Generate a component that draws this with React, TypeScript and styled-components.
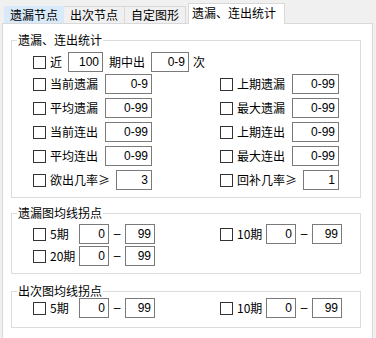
import React from "react";
import styled, { createGlobalStyle } from "styled-components";

const GlobalStyle = createGlobalStyle`
  html, body {
    margin: 0;
    padding: 0;
  }
  body {
    background: #f0f0f0;
    overflow: hidden;
    font-family: "Noto Sans CJK SC", "Microsoft YaHei", sans-serif;
    font-size: 12px;
    color: #000;
  }
`;

const Window = styled.div`
  width: 376px;
  height: 338px;
  overflow: hidden;
  background: #f0f0f0;
`;

const TabBar = styled.div`
  display: flex;
  align-items: flex-end;
  height: 23px;
  padding-left: 4px;
  position: relative;
  z-index: 1;
`;

const Tab = styled.div<{ $w: number; $active?: boolean; $hot?: boolean }>`
  box-sizing: border-box;
  width: ${(p) => p.$w}px;
  height: ${(p) => (p.$active ? 21 : 17)}px;
  margin-left: ${(p) => (p.$active ? 2 : 0)}px;
  margin-bottom: ${(p) => (p.$active ? -1 : 0)}px;
  padding-right: ${(p) => (p.$active ? 5 : 0)}px;
  border: 1px solid ${(p) => (p.$hot ? "#d8eaf9" : "#d9d9d9")};
  border-bottom: none;
  border-left-width: ${(p) => (p.$active || p.$hot ? 1 : 0)}px;
  background: ${(p) => (p.$active ? "#fff" : p.$hot ? "#d8eaf9" : "#f0f0f0")};
  text-align: center;
  font-size: 12px;
  line-height: ${(p) => (p.$active ? 18 : 15)}px;
  white-space: nowrap;
`;

const Panel = styled.div`
  box-sizing: border-box;
  margin-left: 2px;
  width: 371px;
  height: 330px;
  border: 1px solid #d9d9d9;
  background: #fff;
  padding-left: 8px;
`;

const Group = styled.fieldset<{ $mt: number }>`
  box-sizing: border-box;
  width: 350px;
  margin: ${(p) => p.$mt}px 0 0 0;
  padding: 0;
  border: 1px solid #dcdcdc;
  min-inline-size: auto;
`;

const Legend = styled.legend`
  margin-left: 5px;
  padding: 0 1px;
  font-size: 12px;
  line-height: 14px;
`;

const Body = styled.div<{ $pt: number; $pb: number }>`
  padding: ${(p) => p.$pt}px 0 ${(p) => p.$pb}px 21px;
`;

const Row = styled.div<{ $mb?: number }>`
  display: flex;
  align-items: center;
  height: 20px;
  margin-bottom: ${(p) => p.$mb ?? 0}px;
`;

const Grid = styled.div<{ $gap: number }>`
  display: grid;
  grid-template-columns: 187px auto;
  row-gap: ${(p) => p.$gap}px;
`;

const Cell = styled.div<{ $w?: number }>`
  display: flex;
  align-items: center;
  height: 20px;
  width: ${(p) => (p.$w ? `${p.$w}px` : "auto")};
`;

const Check = styled.span`
  box-sizing: border-box;
  flex: none;
  width: 13px;
  height: 13px;
  border: 1px solid #333;
  background: #fff;
`;

const Label = styled.span<{ $ml?: number; $w?: number }>`
  margin-left: ${(p) => p.$ml ?? 4}px;
  width: ${(p) => (p.$w ? `${p.$w}px` : "auto")};
  flex: none;
  font-size: 12px;
  line-height: 16px;
  white-space: nowrap;
`;

const Field = styled.div<{ $w: number; $ml?: number; $push?: boolean }>`
  box-sizing: border-box;
  flex: none;
  width: ${(p) => p.$w}px;
  height: 20px;
  margin-left: ${(p) => (p.$push ? "auto" : `${p.$ml ?? 0}px`)};
  border: 1px solid #7a7a7a;
  background: #fff;
  padding-right: 3px;
  text-align: right;
  font-family: "Liberation Sans", Arial, sans-serif;
  font-size: 12px;
  line-height: 18px;
`;

const Dash = styled.span`
  flex: none;
  width: 16px;
  text-align: center;
  font-family: "Liberation Sans", Arial, sans-serif;
  font-size: 12px;
  line-height: 16px;
`;

type Stat = { label: string; value: string; w: number };

const leftStats: Stat[] = [
  { label: "当前遗漏", value: "0-9", w: 47 },
  { label: "平均遗漏", value: "0-99", w: 47 },
  { label: "当前连出", value: "0-99", w: 47 },
  { label: "平均连出", value: "0-99", w: 47 },
  { label: "欲出几率≥", value: "3", w: 36 },
];

const rightStats: Stat[] = [
  { label: "上期遗漏", value: "0-99", w: 47 },
  { label: "最大遗漏", value: "0-99", w: 47 },
  { label: "上期连出", value: "0-99", w: 47 },
  { label: "最大连出", value: "0-99", w: 47 },
  { label: "回补几率≥", value: "1", w: 36 },
];

const StatCell = ({ s }: { s: Stat }) => (
  <Cell $w={119}>
    <Check />
    <Label>{s.label}</Label>
    <Field $w={s.w} $push>
      {s.value}
    </Field>
  </Cell>
);

const RangeCell = ({ label }: { label: string }) => (
  <Cell>
    <Check />
    <Label $w={29}>{label}</Label>
    <Field $w={30}>0</Field>
    <Dash>–</Dash>
    <Field $w={30}>99</Field>
  </Cell>
);

const App = () => {
  return (
    <Window>
      <GlobalStyle />
      <TabBar>
        <Tab $w={60} $hot>
          遗漏节点
        </Tab>
        <Tab $w={61}>出次节点</Tab>
        <Tab $w={61}>自定图形</Tab>
        <Tab $w={97} $active>
          遗漏、连出统计
        </Tab>
      </TabBar>
      <Panel>
        <Group $mt={9}>
          <Legend>遗漏、连出统计</Legend>
          <Body $pt={5} $pb={7}>
            <Row $mb={2}>
              <Check />
              <Label>近</Label>
              <Field $w={35} $ml={6}>
                100
              </Field>
              <Label $ml={6}>期中出</Label>
              <Field $w={38} $ml={6}>
                0-9
              </Field>
              <Label $ml={4}>次</Label>
            </Row>
            <Grid $gap={4}>
              {leftStats.map((s, i) => (
                <React.Fragment key={s.label}>
                  <StatCell s={s} />
                  <StatCell s={rightStats[i]} />
                </React.Fragment>
              ))}
            </Grid>
          </Body>
        </Group>

        <Group $mt={8}>
          <Legend>遗漏图均线拐点</Legend>
          <Body $pt={4} $pb={7}>
            <Grid $gap={2}>
              <RangeCell label="5期" />
              <RangeCell label="10期" />
              <RangeCell label="20期" />
            </Grid>
          </Body>
        </Group>

        <Group $mt={10}>
          <Legend>出次图均线拐点</Legend>
          <Body $pt={0} $pb={9}>
            <Grid $gap={2}>
              <RangeCell label="5期" />
              <RangeCell label="10期" />
            </Grid>
          </Body>
        </Group>
      </Panel>
    </Window>
  );
};

export default App;
